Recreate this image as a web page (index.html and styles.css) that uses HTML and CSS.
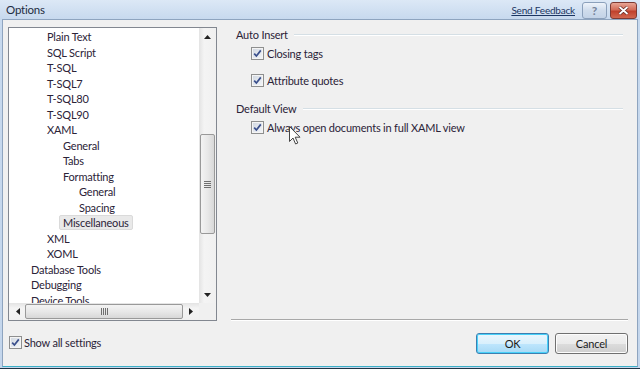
FILE: index.html
```html
<!DOCTYPE html>
<html>
  <head>
  <link rel="stylesheet" href="styles.css">
  </head>
  <body>
    <div class="window">
      <div class="titlebar">
        <span class="title">Options</span>
        <a class="feedback">Send Feedback</a>
        <span class="cap-btn help">?</span>
        <span class="cap-btn close">
          <svg width="11" height="9" viewBox="0 0 11 9">
            <path d="M1.5 1 L9.5 8 M9.5 1 L1.5 8" stroke="#5a2520" stroke-width="3.2" fill="none"/>
            <path d="M1.5 1 L9.5 8 M9.5 1 L1.5 8" stroke="#ffffff" stroke-width="1.8" fill="none"/>
          </svg>
        </span>
      </div>

      <div class="client">
        <div class="main">
          <div class="tree">
            <div class="tree-view">
              <ul class="tree-items">
                <li class="lvl-2"><span class="label">Plain Text</span></li>
                <li class="lvl-2"><span class="label">SQL Script</span></li>
                <li class="lvl-2"><span class="label">T-SQL</span></li>
                <li class="lvl-2"><span class="label">T-SQL7</span></li>
                <li class="lvl-2"><span class="label">T-SQL80</span></li>
                <li class="lvl-2"><span class="label">T-SQL90</span></li>
                <li class="lvl-2"><span class="label">XAML</span></li>
                <li class="lvl-3"><span class="label">General</span></li>
                <li class="lvl-3"><span class="label">Tabs</span></li>
                <li class="lvl-3"><span class="label">Formatting</span></li>
                <li class="lvl-4"><span class="label">General</span></li>
                <li class="lvl-4"><span class="label">Spacing</span></li>
                <li class="lvl-3"><span class="label selected">Miscellaneous</span></li>
                <li class="lvl-2"><span class="label">XML</span></li>
                <li class="lvl-2"><span class="label">XOML</span></li>
                <li class="lvl-1"><span class="label">Database Tools</span></li>
                <li class="lvl-1"><span class="label">Debugging</span></li>
                <li class="lvl-1"><span class="label">Device Tools</span></li>
              </ul>
            </div>
            <div class="vscroll">
              <div class="sb-btn">
                <svg width="7" height="4" viewBox="0 0 7 4"><polygon points="3.5,0 7,4 0,4" fill="#222"/></svg>
              </div>
              <div class="v-track">
                <div class="v-thumb">
                  <svg width="7" height="7" viewBox="0 0 7 7">
                    <path d="M0 0.5 H7 M0 2.5 H7 M0 4.5 H7 M0 6.5 H7" stroke="#6f6f6f" stroke-width="1"/>
                  </svg>
                </div>
              </div>
              <div class="sb-btn">
                <svg width="7" height="4" viewBox="0 0 7 4"><polygon points="0,0 7,0 3.5,4" fill="#222"/></svg>
              </div>
            </div>
            <div class="hscroll">
              <div class="sb-btn">
                <svg width="4" height="7" viewBox="0 0 4 7"><polygon points="0,3.5 4,0 4,7" fill="#222"/></svg>
              </div>
              <div class="h-thumb">
                <svg width="7" height="7" viewBox="0 0 7 7">
                  <path d="M0.5 0 V7 M2.5 0 V7 M4.5 0 V7 M6.5 0 V7" stroke="#6f6f6f" stroke-width="1"/>
                </svg>
              </div>
              <div class="sb-btn">
                <svg width="4" height="7" viewBox="0 0 4 7"><polygon points="0,0 4,3.5 0,7" fill="#222"/></svg>
              </div>
            </div>
            <div class="corner"></div>
          </div>

          <div class="page">
            <div class="group-head">Auto Insert</div>
            <div class="option">
              <span class="check"><svg width="9" height="9" viewBox="0 0 9 9"><path d="M1.2 4.6 L3.4 7 L7.8 1.4" stroke="#3a4f8c" stroke-width="1.7" fill="none"/></svg></span>
              Closing tags
            </div>
            <div class="option">
              <span class="check"><svg width="9" height="9" viewBox="0 0 9 9"><path d="M1.2 4.6 L3.4 7 L7.8 1.4" stroke="#3a4f8c" stroke-width="1.7" fill="none"/></svg></span>
              Attribute quotes
            </div>
            <div class="group-head">Default View</div>
            <div class="option">
              <span class="check"><svg width="9" height="9" viewBox="0 0 9 9"><path d="M1.2 4.6 L3.4 7 L7.8 1.4" stroke="#3a4f8c" stroke-width="1.7" fill="none"/></svg></span>
              Always open documents in full XAML view
            </div>
            <div class="separator"></div>
          </div>
        </div>

        <div class="footer">
          <div class="option show-all">
            <span class="check"><svg width="9" height="9" viewBox="0 0 9 9"><path d="M1.2 4.6 L3.4 7 L7.8 1.4" stroke="#3a4f8c" stroke-width="1.7" fill="none"/></svg></span>
            Show all settings
          </div>
          <div class="buttons">
            <span class="button default">OK</span>
            <span class="button">Cancel</span>
          </div>
        </div>
      </div>

      <!-- mouse pointer hovering the option -->
      <svg class="cursor" width="12" height="19" viewBox="0 0 12 19">
        <path d="M0.5 0.5 V15.5 L4 12 L6.6 18 L8.8 17 L6.2 11.2 H11 Z" fill="#fff" stroke="#444" stroke-width="1"/>
      </svg>
    </div>
  </body>
</html>
```

FILE: styles.css
```css
html, body {
  height: 100%;
}
body {
  --text: #2b2338;
  --frame: #c4d6ec;
  --border: #828790;

  margin: 0;
  overflow: hidden;
  font-family: Lato, "Liberation Sans", sans-serif;
  font-size: 11px;
  letter-spacing: -0.2px;
  color: var(--text);
  background: var(--frame);
}

.window {
  position: relative;
  height: 100%;
  box-sizing: border-box;
  display: flex;
  flex-direction: column;
  padding: 0 2px 1px;
  background: linear-gradient(to bottom, #dce8f6 0, #c7d9ee 19px, #c4d6ec 100%);
  border-bottom: 1px solid #1f3444;
}

/* title bar */
.titlebar {
  height: 19px;
  display: flex;
  align-items: center;
  padding: 0 1px 0 4px;
}
.title {
  flex-grow: 1;
  color: #1e2c3f;
  font-size: 11.5px;
}
.feedback {
  color: #1b3561;
  font-size: 10px;
  text-decoration: underline;
  margin-right: 7px;
}
.cap-btn {
  height: 17px;
  box-sizing: border-box;
  border-radius: 3px;
  display: flex;
  align-items: center;
  justify-content: center;
  margin-top: 1px;
}
.help {
  width: 25px;
  border: 1px solid #8ba0bb;
  background: linear-gradient(to bottom, #eef3fa, #cfdcec 50%, #c3d3e7);
  color: #76849a;
  font-weight: bold;
  font-size: 12px;
  margin-right: 3px;
}
.close {
  width: 27px;
  border: 1px solid #7d3a33;
  background: linear-gradient(to bottom, #e8a595, #d36c58 45%, #c0412c 55%, #d2674f);
}

/* dialog body */
.client {
  flex-grow: 1;
  display: flex;
  flex-direction: column;
  background: #f0f0f0;
  border: 1px solid #8ea4bf;
  border-bottom-color: #3cb0c8;
  padding: 7px 9px 0 5px;
}
.main {
  height: 294px;
  display: flex;
  gap: 14px;
}

/* tree view */
.tree {
  width: 209px;
  box-sizing: border-box;
  border: 1px solid var(--border);
  background: white;
  display: grid;
  grid-template-columns: 1fr 17px;
  grid-template-rows: 1fr 17px;
}
.tree-view {
  overflow: hidden;
}
.tree-items {
  list-style: none;
  margin: 0;
  padding: 1px 0 0;
}
.tree-items li {
  height: 15.5px;
  line-height: 15px;
  white-space: nowrap;
}
.lvl-1 { padding-left: 18px; }
.lvl-2 { padding-left: 34px; }
.lvl-3 { padding-left: 50px; }
.lvl-4 { padding-left: 66px; }
.label {
  display: inline-block;
  padding: 0 3px;
  border: 1px solid transparent;
  border-radius: 2px;
  line-height: 13px;
}
.label.selected {
  background: #e9e9e9;
  border-color: #dadada;
}

/* scrollbars */
.vscroll {
  display: flex;
  flex-direction: column;
  background: linear-gradient(to right, #e3e3e3, #f4f4f4 30%, #f0f0f0);
}
.hscroll {
  display: flex;
  background: linear-gradient(to bottom, #e3e3e3, #f4f4f4 30%, #f0f0f0);
}
.sb-btn {
  width: 17px;
  height: 17px;
  flex-shrink: 0;
  display: flex;
  align-items: center;
  justify-content: center;
}
.v-track {
  flex-grow: 1;
  padding-top: 89px;
}
.v-thumb {
  height: 100px;
  margin: 0 1px;
  box-sizing: border-box;
  border: 1px solid #999;
  border-radius: 2px;
  background: linear-gradient(to right, #f3f3f3, #e8e8e8 50%, #d8d8d8);
  display: flex;
  align-items: center;
  justify-content: center;
}
.h-thumb {
  flex-grow: 1;
  margin: 1px -1px;
  box-sizing: border-box;
  border: 1px solid #999;
  border-radius: 2px;
  background: linear-gradient(to bottom, #f3f3f3, #e8e8e8 50%, #d8d8d8);
  display: flex;
  align-items: center;
  justify-content: center;
}
.corner {
  background: #f0f0f0;
}

/* option page */
.page {
  flex-grow: 1;
  display: flex;
  flex-direction: column;
  padding-top: 1px;
}
.group-head {
  display: flex;
  align-items: center;
  gap: 6px;
  line-height: 14px;
  padding: 0 5px;
}
.group-head::after {
  content: "";
  flex-grow: 1;
  height: 1px;
  margin-top: -1px;
  background: #d5dfe5;
  box-shadow: 0 1px 0 #fff;
}
.group-head + .option {
  margin-top: 4px;
}
.option + .option {
  margin-top: 12px;
}
.option + .group-head {
  margin-top: 14px;
}
.option {
  display: flex;
  align-items: center;
  gap: 3px;
  line-height: 15px;
  padding-left: 20px;
}
.check {
  width: 13px;
  height: 13px;
  box-sizing: border-box;
  border: 1px solid #8e8f8f;
  box-shadow: inset 0 0 0 1px #f4f4f4;
  background: linear-gradient(135deg, #cfd6e0, #f5f7fa);
  display: inline-flex;
  align-items: center;
  justify-content: center;
  flex-shrink: 0;
}
.separator {
  margin-top: auto;
  height: 1px;
  margin-bottom: 1px;
  background: #a8a8a8;
  box-shadow: 0 1px 0 #fff;
}

/* footer */
.footer {
  display: flex;
  align-items: center;
  justify-content: space-between;
  padding-top: 12px;
}
.show-all {
  padding-left: 1px;
  gap: 2px;
  margin-top: -2px;
}
.buttons {
  display: flex;
  gap: 6px;
}
.button {
  width: 73px;
  height: 21px;
  box-sizing: border-box;
  border: 1px solid #707070;
  border-radius: 3px;
  background: linear-gradient(to bottom, #f2f2f2, #ebebeb 50%, #dddddd 51%, #cfcfcf);
  box-shadow: inset 0 0 0 1px #fcfcfc;
  display: flex;
  align-items: center;
  justify-content: center;
  color: #1c1c1c;
}
.button.default {
  border-color: #3c7fb1;
  background: linear-gradient(to bottom, #eaf6fd, #d9f0fc 50%, #bee6fd 51%, #a7d9f5);
  box-shadow: inset 0 0 0 1px #48d1f9;
}

.cursor {
  position: absolute;
  left: 289px;
  top: 126px;
}
```
